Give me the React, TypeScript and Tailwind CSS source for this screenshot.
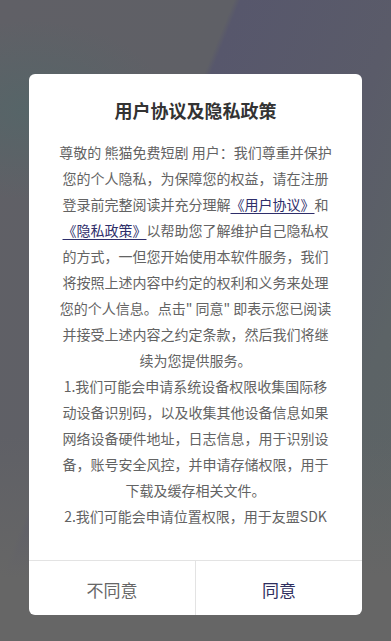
import React from "react";

const font = {
  fontFamily: '"Noto Sans CJK SC", "Noto Sans", sans-serif',
};

export default function App() {
  return (
    <div
      className="w-[391px] h-[641px] overflow-hidden flex justify-center pt-[74px] bg-[#666666] bg-[linear-gradient(to_bottom,rgba(102,102,102,0)_0%,rgba(102,102,102,0)_68%,#666666_90%),radial-gradient(ellipse_140px_90px_at_30px_110px,#566568_0%,rgba(86,101,104,0)_100%),linear-gradient(112deg,#606066_0%,#5f6066_36%,#57576c_37%,#5a5b69_62%,#5c6366_80%,#5d6465_100%)]"
      style={font}
    >
      <div className="w-[333px] h-[541px] bg-white rounded-[6px] flex flex-col overflow-hidden">
        <div className="pt-[24px] text-center text-[18px] leading-[24px] font-semibold text-[#333333]">
          用户协议及隐私政策
        </div>
        <div className="mt-[17px] px-[28px] flex-1 overflow-hidden text-center text-[14px] leading-[26px] text-[#636363] whitespace-nowrap">
          <p>
            尊敬的 熊猫免费短剧 用户：我们尊重并保护
            <br />
            您的个人隐私，为保障您的权益，请在注册
            <br />
            登录前完整阅读并充分理解
            <span className="text-[#2e2e6a] underline underline-offset-[3px] decoration-[#2e2e6a]">
              《用户协议》
            </span>
            和
            <br />
            <span className="text-[#2e2e6a] underline underline-offset-[3px] decoration-[#2e2e6a]">
              《隐私政策》
            </span>
            以帮助您了解维护自己隐私权
            <br />
            的方式，一但您开始使用本软件服务，我们
            <br />
            将按照上述内容中约定的权利和义务来处理
            <br />
            您的个人信息。点击" 同意" 即表示您已阅读
            <br />
            并接受上述内容之约定条款，然后我们将继
            <br />
            续为您提供服务。
          </p>
          <p>
            1.我们可能会申请系统设备权限收集国际移
            <br />
            动设备识别码，以及收集其他设备信息如果
            <br />
            网络设备硬件地址，日志信息，用于识别设
            <br />
            备，账号安全风控，并申请存储权限，用于
            <br />
            下载及缓存相关文件。
          </p>
          <p>2.我们可能会申请位置权限，用于友盟SDK</p>
        </div>
        <div className="h-[55px] flex border-t border-[#e3e3e3] text-[17px]">
          <button className="flex-1 flex items-center justify-center pt-[3px] text-[#666666] border-r border-[#e3e3e3]">
            不同意
          </button>
          <button className="flex-1 flex items-center justify-center pt-[3px] text-[#2e2e5e]">
            同意
          </button>
        </div>
      </div>
    </div>
  );
}
